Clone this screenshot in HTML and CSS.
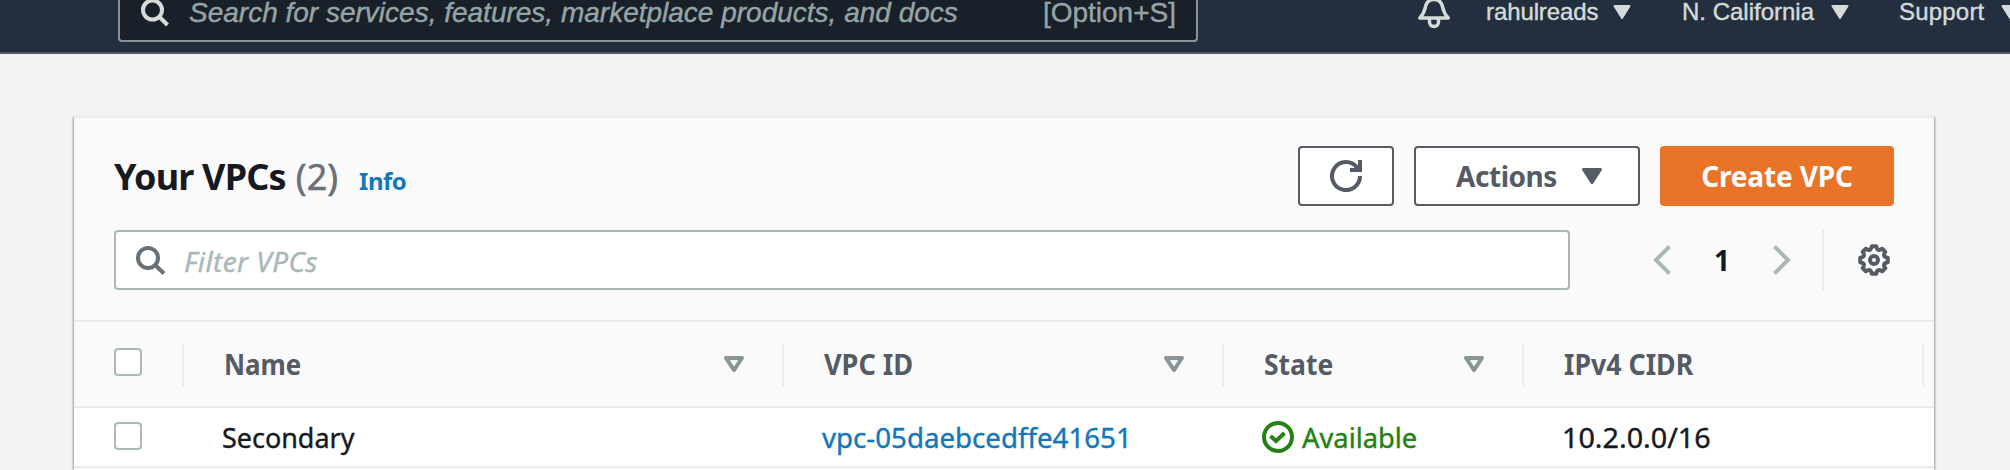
FILE: index.html
```html
<!DOCTYPE html>
<html lang="en">
<head>
<meta charset="utf-8">
<title>Your VPCs</title>
<link rel="stylesheet" href="styles.css">
</head>
<body>
<header class="topnav">
  <div class="nav-search">
    <svg class="nav-search-icon" width="30" height="30" viewBox="0 0 30 30"><circle cx="11.500" cy="12" r="9.500"/><path d="M18 18.500 26.500 27"/></svg>
    <span class="nav-placeholder">Search for services, features, marketplace products, and docs</span>
    <span class="shortcut">[Option+S]</span>
  </div>
  <nav class="nav-menu">
    <svg class="bell" width="34" height="34" viewBox="0 0 34 34"><path d="M2.800 23C7.500 18 7.500 15.500 8.800 10.500 10 6.500 12.500 4.500 17 4.500s7 2 8.200 6C26.500 15.500 26.500 18 31.200 23z"/><path d="M12.500 23.500V27a4.500 4.500 0 0 0 9 0v-3.500"/></svg>
    <span class="nav-item user">rahulreads<svg class="caret" width="18" height="14" viewBox="0 0 18 14"><path d="M1.500 1h15L9 13z"/></svg></span>
    <span class="nav-item region">N. California<svg class="caret" width="18" height="14" viewBox="0 0 18 14"><path d="M1.500 1h15L9 13z"/></svg></span>
    <span class="nav-item support">Support<svg class="caret" width="18" height="14" viewBox="0 0 18 14"><path d="M1.500 1h15L9 13z"/></svg></span>
  </nav>
</header>
<main class="panel">
  <div class="panel-head">
    <h1 class="title">Your VPCs</h1>
    <span class="count">(2)</span>
    <a class="info">Info</a>
    <div class="buttons">
      <button class="btn refresh"><svg width="32" height="32" viewBox="0 0 32 32"><path d="M30 16A14 14 0 1 1 27 7.400L29 10M20 10h10V0"/></svg></button>
      <button class="btn actions">Actions<svg class="caret" width="20" height="16" viewBox="0 0 20 16"><path d="M1.500 1.500h17L10 14.500z"/></svg></button>
      <button class="btn primary">Create VPC</button>
    </div>
  </div>
  <div class="toolbar">
    <div class="filter">
      <svg width="30" height="30" viewBox="0 0 30 30"><circle cx="12" cy="12" r="10"/><path d="M19 19l9 8.500"/></svg>
      <span class="filter-text">Filter VPCs</span>
    </div>
    <div class="pager">
      <svg class="chev" width="18" height="30" viewBox="0 0 18 30"><path d="M16.500 1.500 3 15l13.500 13.500"/></svg>
      <span>1</span>
      <svg class="chev" width="18" height="30" viewBox="0 0 18 30"><path d="M1.500 1.500 15 15 1.500 28.500"/></svg>
    </div>
    <div class="settings">
      <svg width="32" height="32" viewBox="-16 -16 32 32"><path d="M13.800 2.200Q7.800 3.300 11.300 8.200L8.200 11.300Q3.300 7.800 2.200 13.800H-2.200Q-3.300 7.800 -8.200 11.300L-11.300 8.200Q-7.800 3.300 -13.800 2.200V-2.200Q-7.800 -3.300 -11.300 -8.200L-8.200 -11.300Q-3.300 -7.800 -2.200 -13.800H2.200Q3.300 -7.800 8.200 -11.300L11.300 -8.200Q7.800 -3.300 13.800 -2.200Z"/><circle r="4"/></svg>
    </div>
  </div>
  <div class="row head">
    <div class="cell check"><span class="box"></span></div>
    <div class="cell"><span class="label w-name">Name</span><svg class="sort" width="20" height="16" viewBox="0 0 20 16"><path d="M2 2h16L10 14z"/></svg></div>
    <div class="cell"><span class="label w-id">VPC ID</span><svg class="sort" width="20" height="16" viewBox="0 0 20 16"><path d="M2 2h16L10 14z"/></svg></div>
    <div class="cell"><span class="label w-state">State</span><svg class="sort" width="20" height="16" viewBox="0 0 20 16"><path d="M2 2h16L10 14z"/></svg></div>
    <div class="cell"><span class="label w-cidr">IPv4 CIDR</span></div>
  </div>
  <div class="row data">
    <div class="cell check"><span class="box"></span></div>
    <div class="cell"><span class="value v-name">Secondary</span></div>
    <div class="cell"><a class="value v-id">vpc-05daebcedffe41651</a></div>
    <div class="cell state"><svg width="32" height="32" viewBox="0 0 32 32"><circle cx="16" cy="16" r="14"/><path d="M8.500 15l5.500 5 8.500-8"/></svg><span class="value v-state">Available</span></div>
    <div class="cell"><span class="value v-cidr">10.2.0.0/16</span></div>
  </div>
</main>
</body>
</html>
```
FILE: styles.css
```css
* { box-sizing: border-box; }
body {
  margin: 0;
  width: 2010px;
  height: 470px;
  overflow: hidden;
  background: #f2f3f3;
  font-family: "Noto Sans", "Open Sans", sans-serif;
  font-size: 28px;
  line-height: 38px;
  color: #16191f;
}
svg { display: block; flex: none; fill: none; }
span, a, h1 { white-space: nowrap; }

.topnav {
  display: flex;
  height: 54px;
  padding-left: 118px;
  background: #232f3e;
  border-bottom: 2px solid #545b64;
  font-family: "Liberation Sans", Arial, sans-serif;
  color: #d5dbdb;
  -webkit-text-stroke: .4px;
}
.nav-search {
  display: flex;
  flex: none;
  width: 1080px;
  height: 42px;
  padding: 0 20px 0 21px;
  background: #1a202a;
  border: 2px solid #879596;
  border-top: 0;
  border-radius: 0 0 4px 4px;
  line-height: 26px;
  color: #95a5a6;
}
.nav-search-icon { stroke: #d5dbdb; stroke-width: 4; margin-top: -2px; }
.nav-placeholder { flex: 1; margin-left: 18px; font-style: italic; }
.nav-menu { display: flex; flex: none; margin-left: 219px; font-size: 24px; line-height: 24px; }
.bell { stroke: #d5dbdb; stroke-width: 3.5; stroke-linejoin: round; margin-top: -5px; }
.nav-item { display: flex; flex: none; justify-content: space-between; }
.nav-item .caret { margin-top: 5px; fill: #d5dbdb; stroke: #d5dbdb; stroke-width: 2; stroke-linejoin: round; }
.user { width: 145px; margin-left: 35px; letter-spacing: -.1px; }
.region { width: 167px; margin-left: 51px; }
.support { width: 120px; margin-left: 50px; letter-spacing: .2px; }

.panel {
  width: 1860px;
  height: 352px;
  margin: 64px 0 0 74px;
  background: #fafafa;
  box-shadow: 0 -2px 0 #eaeded, 0 0 2px 1px rgba(0, 28, 36, .4);
}
.panel-head { display: flex; height: 112px; padding: 28px 40px 0; }
.title { margin: 1px 0 0; font-size: 36px; line-height: 60px; letter-spacing: -.8px; }
.count { margin: 1px 0 0 10px; font-size: 36px; line-height: 60px; color: #687078; -webkit-text-stroke: .5px; }
.info { margin: 16px 0 0 21px; font-size: 24px; font-weight: 700; letter-spacing: -.5px; color: #1476bb; }
.buttons { display: flex; gap: 20px; margin-left: auto; }
.btn {
  display: flex;
  align-items: center;
  justify-content: center;
  height: 60px;
  padding: 0;
  font: 700 28px/38px "Noto Sans", "Open Sans", sans-serif;
  color: #545b64;
  background: #fff;
  border: 2px solid #545b64;
  border-radius: 4px;
}
.refresh { width: 96px; }
.refresh svg { stroke: #545b64; stroke-width: 4; }
.actions { width: 226px; justify-content: space-between; padding: 0 36px 0 40px; letter-spacing: -.45px; }
.actions .caret { fill: #545b64; stroke: #545b64; stroke-width: 3; stroke-linejoin: round; }
.primary { width: 234px; background: #e97326; border-color: #e97326; color: #fff; letter-spacing: -.15px; }

.toolbar { display: flex; height: 90px; padding: 0 40px; }
.filter {
  display: flex;
  align-items: center;
  width: 1456px;
  height: 60px;
  padding-left: 20px;
  gap: 18px;
  background: #fff;
  border: 2px solid #aab7b8;
  border-radius: 4px;
  color: #aab7b8;
  font-style: italic;
}
.filter svg { margin-top: 2px; stroke: #687078; stroke-width: 4; }
.filter-text { padding-top: 2px; letter-spacing: .4px; -webkit-text-stroke: .4px; }
.pager { display: flex; align-items: center; justify-content: space-between; width: 138px; height: 60px; margin-left: 83px; font-weight: 700; }
.chev { stroke: #aab7b8; stroke-width: 4; }
.settings { display: flex; align-items: center; height: 60px; margin-left: 31px; padding-left: 34px; border-left: 2px solid #eaeded; }
.settings svg { stroke: #545b64; stroke-width: 4; stroke-linejoin: round; }

.row { display: grid; grid-template-columns: 110px 600px 440px 300px 400px; }
.cell { display: flex; align-items: center; padding-left: 38px; }
.check { padding-left: 40px; }
.box { width: 28px; height: 28px; background: #fff; border: 2px solid #aab7b8; border-radius: 4px; }
.head { height: 88px; padding: 22px 0 20px; border-top: 2px solid #eaeded; border-bottom: 2px solid #eaeded; font-weight: 700; color: #545b64; }
.head .cell { height: 42px; border-right: 2px solid #eaeded; padding-left: 40px; padding-right: 38px; }
.head .check { padding: 0 0 6px 40px; }
.label, .value { transform-origin: left center; }
.label { padding-bottom: 2px; }
.value { -webkit-text-stroke: .4px; }
.w-name { transform: scaleX(.925); }
.w-id { transform: scaleX(.967); }
.w-state { transform: scaleX(.945); }
.w-cidr { transform: scaleX(.955); }
.v-name { transform: scaleX(.962); }
.v-id { transform: scaleX(.988); }
.v-state { transform: scaleX(.975); }
.v-cidr { transform: scaleX(1.025); }
.sort { margin: -2px 0 0 auto; stroke: #879596; stroke-width: 4; stroke-linejoin: round; }
.data { height: 60px; background: #fff; border-bottom: 2px solid #eaeded; }
.data .check { padding-bottom: 2px; }
.v-id { color: #1476bb; }
.state { color: #238212; gap: 8px; }
.state svg { stroke: #238212; stroke-width: 4; }
```
